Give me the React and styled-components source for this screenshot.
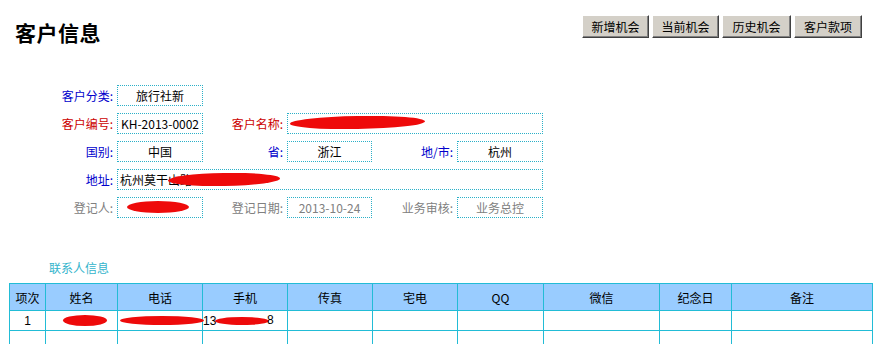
import React from "react";
import styled, { createGlobalStyle } from "styled-components";

const GlobalStyle = createGlobalStyle`
  body {
    margin: 0;
    background: #ffffff;
    font-family: "Noto Sans CJK SC", "Liberation Sans", sans-serif;
    font-size: 12px;
    color: #000;
  }
`;

const Page = styled.div`
  width: 878px;
  height: 344px;
  overflow: hidden;
  position: relative;
`;

const Header = styled.div`
  display: flex;
  justify-content: space-between;
  align-items: flex-start;
  padding: 15px 16px 0 15px;
  height: 70px;
  box-sizing: border-box;
`;

const Title = styled.h1`
  margin: 3px 0 0 0;
  font-size: 21px;
  line-height: 28px;
  font-weight: 700;
  letter-spacing: 0.5px;
`;

const Buttons = styled.div`
  display: flex;
  gap: 3px;
`;

const Button = styled.button`
  width: ${(p) => p.w || 67}px;
  height: 23px;
  padding: 0;
  background: #d4d0c8;
  font-family: inherit;
  font-size: 12px;
  color: #000;
  border: 1px solid;
  border-color: #ffffff #404040 #404040 #ffffff;
  box-shadow: inset -1px -1px 0 #808080;
`;

const Form = styled.div`
  display: grid;
  grid-template-columns: 87px 86px 84px 85px 85px 86px;
  grid-auto-rows: 21px;
  row-gap: 7px;
  margin: 15px 0 0 30px;
  width: 513px;
`;

const Label = styled.div`
  display: flex;
  align-items: center;
  justify-content: flex-end;
  padding-right: 4px;
  color: ${(p) => p.color || "#0000cc"};
  grid-column: ${(p) => p.col || "auto"};
  white-space: nowrap;
`;

const Field = styled.div`
  position: relative;
  box-sizing: border-box;
  border: 1px dotted #2bb0c8;
  display: flex;
  align-items: center;
  justify-content: ${(p) => (p.left ? "flex-start" : "center")};
  padding-left: ${(p) => (p.left ? "2px" : "0")};
  color: ${(p) => (p.muted ? "#808080" : "#000")};
  grid-column: ${(p) => (p.span ? `span ${p.span}` : "auto")};
  white-space: nowrap;
  overflow: hidden;
`;

const Redact = styled.span`
  position: absolute;
  background: #ee0a0a;
  border-radius: 50%;
  transform: rotate(${(p) => p.r || 0}deg);
`;

const SectionTitle = styled.div`
  color: #33b4cc;
  margin: 43px 0 0 49px;
  line-height: 14px;
`;

const Table = styled.table`
  border-collapse: collapse;
  margin: 8px 0 0 9px;
  table-layout: fixed;
  width: 863px;
`;

const Th = styled.th`
  background: #99ccff;
  border: 1px solid #22bcd6;
  height: 26px;
  padding: 0;
  font-weight: 400;
  font-size: 12px;
  text-align: center;
`;

const Td = styled.td`
  position: relative;
  border: 1px solid #22bcd6;
  height: 19px;
  padding: 0;
  text-align: ${(p) => (p.left ? "left" : "center")};
  font-size: 12px;
  font-family: "Liberation Sans", "Noto Sans CJK SC", sans-serif;
  white-space: nowrap;
`;

const columns = [
  ["项次", 36],
  ["姓名", 72],
  ["电话", 85],
  ["手机", 85],
  ["传真", 85],
  ["宅电", 85],
  ["QQ", 86],
  ["微信", 116],
  ["纪念日", 72],
  ["备注", 141],
];

export default function App() {
  return (
    <Page>
      <GlobalStyle />
      <Header>
        <Title>客户信息</Title>
        <Buttons>
          <Button>新增机会</Button>
          <Button>当前机会</Button>
          <Button w={69}>历史机会</Button>
          <Button w={68}>客户款项</Button>
        </Buttons>
      </Header>

      <Form>
        <Label>客户分类:</Label>
        <Field>旅行社新</Field>
        <Label col="3 / 7" />

        <Label color="#cc0000">客户编号:</Label>
        <Field>KH-2013-0002</Field>
        <Label color="#cc0000">客户名称:</Label>
        <Field left span={3}>
          <Redact style={{ left: 2, top: 2, width: 135, height: 13 }} r={-1} />
        </Field>

        <Label>国别:</Label>
        <Field>中国</Field>
        <Label>省:</Label>
        <Field>浙江</Field>
        <Label>地/市:</Label>
        <Field>杭州</Field>

        <Label>地址:</Label>
        <Field left span={5}>
          杭州莫干山路
          <Redact style={{ left: 50, top: 3, width: 112, height: 13 }} r={-1} />
        </Field>

        <Label color="#808080">登记人:</Label>
        <Field muted>
          <Redact style={{ left: 9, top: 3, width: 62, height: 12 }} />
        </Field>
        <Label color="#808080">登记日期:</Label>
        <Field muted>2013-10-24</Field>
        <Label color="#808080">业务审核:</Label>
        <Field muted>业务总控</Field>
      </Form>

      <SectionTitle>联系人信息</SectionTitle>
      <Table>
        <colgroup>
          {columns.map(([name, w]) => (
            <col key={name} style={{ width: w }} />
          ))}
        </colgroup>
        <thead>
          <tr>
            {columns.map(([name]) => (
              <Th key={name}>{name}</Th>
            ))}
          </tr>
        </thead>
        <tbody>
          <tr>
            <Td>1</Td>
            <Td>
              <Redact style={{ left: 17, top: 4, width: 44, height: 11 }} />
            </Td>
            <Td>
              <Redact style={{ left: 2, top: 5, width: 84, height: 9 }} />
            </Td>
            <Td left>
              13
              <Redact style={{ left: 12, top: 6, width: 54, height: 8 }} />
              <span style={{ position: "absolute", left: 64, top: 2 }}>8</span>
            </Td>
            {columns.slice(4).map(([name]) => (
              <Td key={name} />
            ))}
          </tr>
          <tr>
            {columns.map(([name]) => (
              <Td key={name} />
            ))}
          </tr>
        </tbody>
      </Table>
    </Page>
  );
}
